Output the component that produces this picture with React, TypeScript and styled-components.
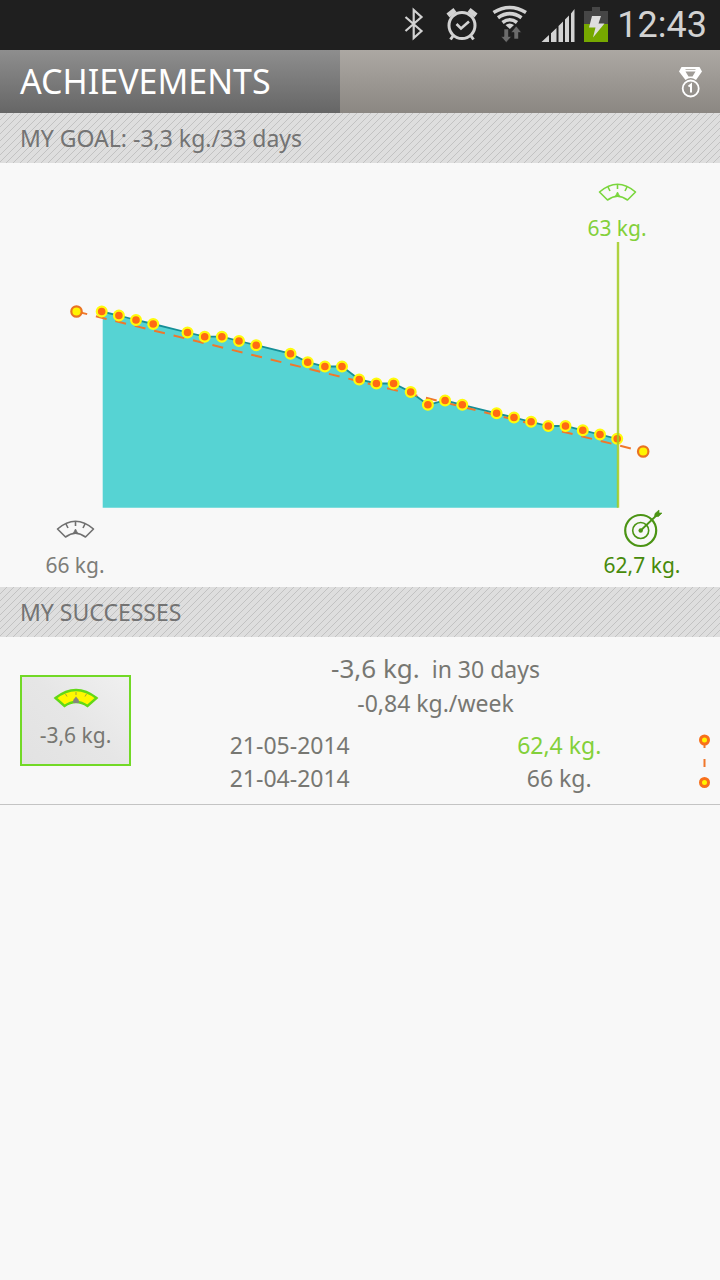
import React from "react";
import styled, { createGlobalStyle } from "styled-components";

const GlobalStyle = createGlobalStyle`
  * { box-sizing: border-box; }
  body {
    margin: 0;
    background: #f8f8f8;
    color: #777772;
    font-family: "Noto Sans", "Open Sans", sans-serif;
  }
`;

const Page = styled.div`
  min-height: 100vh;
  display: flex;
  flex-direction: column;
`;

const StatusBar = styled.div`
  display: flex;
  align-items: center;
  justify-content: flex-end;
  height: 50px;
  padding-right: 13px;
  background: #1f1f1f;
  color: #d2d2d2;
`;

const StatusIcons = styled.svg`
  width: 220px;
  height: 50px;
  flex: none;
`;

const Clock = styled.time`
  margin-left: 7px;
  font: 36px/46px Roboto, sans-serif;
`;

const Header = styled.header`
  display: flex;
  height: 63px;
  background: linear-gradient(#aca8a3, #8b8782);
`;

const Title = styled.h1`
  width: 340px;
  margin: 0;
  padding-left: 20px;
  background: linear-gradient(#8e8e8e, #666);
  color: #fff;
  font-size: 34px;
  font-weight: 400;
  line-height: 63px;
`;

const MedalButton = styled.button`
  display: flex;
  margin-left: auto;
  padding: 15px 17px 0 0;
  border: 0;
  background: none;
`;

const SectionTitle = styled.h2`
  margin: 0;
  padding-left: 20px;
  background: linear-gradient(135deg, #dedede 45%, #c2c2c2 45% 55%, #dedede 55%)
    0 0 / 7px 7px;
  color: #737373;
  font-size: 23px;
  font-weight: 400;
  line-height: 50px;
`;

const Chart = styled.svg`
  display: block;
  width: 100%;
  height: auto;
`;

const ChartLabel = styled.text`
  fill: ${(p) => p.color};
  font-size: 21px;
  text-anchor: middle;
`;

const SuccessRow = styled.article`
  display: flex;
  align-items: flex-start;
  gap: 20px;
  padding: 14px 0 9px 20px;
  border-bottom: 1px solid #c4c4c4;
`;

const Badge = styled.div`
  display: flex;
  flex-direction: column;
  align-items: center;
  flex: none;
  width: 111px;
  height: 91px;
  margin-top: 24px;
  padding-top: 11px;
  border: 2px solid #72d926;
  background: linear-gradient(45deg, #e2e2e2, #e6e6e6 50%, #f0f0f0);
  font-size: 21px;
  line-height: 28px;
`;

const BadgeIcon = styled.svg`
  width: 46px;
  height: 22px;
  margin-bottom: 11px;
`;

const Details = styled.div`
  flex: 1;
  text-align: center;
`;

const Summary = styled.p`
  margin: 0;
  font-size: 23px;
  line-height: 34px;
`;

const Loss = styled.span`
  margin-right: 12px;
  font-size: 26px;
`;

const Span = styled.div`
  display: flex;
  align-items: flex-start;
  margin-top: 9px;
  padding: 0 5px 0 4px;
`;

const Weights = styled.table`
  flex: 1;
  border-collapse: collapse;
  table-layout: fixed;
  font-size: 23px;
  line-height: 33px;
`;

const Cell = styled.td<{ $good?: boolean }>`
  width: 50%;
  padding: 0;
  color: ${(p) => (p.$good ? "#83d03a" : "inherit")};
`;

const points: [number, number][] = [
  [101.7, 148.5], [118.9, 152.5], [136, 157], [153.2, 161], [187.5, 169.5],
  [204.7, 173.7], [221.9, 173.7], [239, 178], [256.2, 182.2], [290.5, 190.7],
  [307.7, 199.2], [324.9, 203.5], [342, 203.5], [359.2, 216.5], [376.4, 220.5],
  [393.6, 220.5], [410.7, 229], [427.9, 241.8], [445.1, 237.5], [462.3, 241.8],
  [496.6, 250.3], [514, 254.5], [531.1, 258.8], [548.3, 263], [565.5, 263],
  [582.8, 267.3], [600, 271.5], [617.2, 275.8],
];
const line = points.map((p) => p.join(",")).join(" ");
const areaTop = points.slice(1).map((p) => p.join(",")).join(" ");

const arc = "M-18 -1 Q0 -16.500 18 -1 L10 7 Q0 -0.500 -10 7 Z";

function Gauge({ x, y, color }: { x: number; y: number; color: string }) {
  return (
    <g transform={`translate(${x} ${y})`} fill="none" stroke={color} strokeWidth="1.6" strokeLinejoin="round">
      <path d={arc} />
      <path d="M0 -8V-4M-9.500 -6L-7.500 -2M9.500 -6L7.500 -2" />
      <path d="M-2 3L0 -1L2 3Z" fill={color} strokeWidth="0.800" />
    </g>
  );
}

function GoalChart() {
  return (
    <Chart viewBox="0 0 720 424" role="img" aria-label="Weight progress">
      <polygon points={`102.700,344.700 102.700,148.500 ${areaTop} 618,344.700`} fill="#56d3d3" />
      <polyline points={line} fill="none" stroke="#168f97" strokeWidth="1.8" />
      <line x1="76.500" y1="148.500" x2="643.200" y2="288.500" stroke="#f0772b" strokeWidth="2" strokeDasharray="11 9" />
      {points.map(([x, y]) => (
        <circle key={x} cx={x} cy={y} r="4.900" fill="#ff6a13" stroke="#fffb0b" strokeWidth="2.200" />
      ))}
      {[[76.5, 148.5], [643.2, 288.5]].map(([x, y]) => (
        <circle key={x} cx={x} cy={y} r="5.200" fill="#fff500" stroke="#ea7322" strokeWidth="2.200" />
      ))}
      <line x1="618" y1="79" x2="618" y2="344.700" stroke="#a2cb20" strokeOpacity="0.850" strokeWidth="2.400" />
      <Gauge x={617.5} y={30} color="#7ad63d" />
      <ChartLabel x="617" y="73" color="#83d03a">63 kg.</ChartLabel>
      <Gauge x={75.5} y={367} color="#707070" />
      <ChartLabel x="75" y="410" color="#7d7d78">66 kg.</ChartLabel>
      <g fill="none" stroke="#4b9414">
        <circle cx="640.700" cy="367.500" r="15.500" strokeWidth="2.200" />
        <circle cx="640.700" cy="367.500" r="8" strokeWidth="1.600" />
        <circle cx="640.700" cy="367.500" r="2.200" fill="#4b9414" stroke="none" />
        <path d="M640.700 367.500L658 351" strokeWidth="1.800" />
        <path d="M654.500 353.500L655 350.500L659 347V350H662L658.500 353.500Z" fill="#4b9414" strokeWidth="0.600" />
      </g>
      <ChartLabel x="642" y="410" color="#478a0a">62,7 kg.</ChartLabel>
    </Chart>
  );
}

function DeviceIcons() {
  return (
    <StatusIcons viewBox="390 0 220 50" aria-hidden="true">
      <path d="M405.500 17L421.500 31L413.700 38V10L421.500 17L405.500 31" fill="none" stroke="#d2d2d2" strokeWidth="2.200" />
      <g fill="none" stroke="#d2d2d2">
        <circle cx="462" cy="25.500" r="13" strokeWidth="3" />
        <path d="M456.500 24L461 28.500L469 21.500" strokeWidth="2.600" />
        <path d="M453 36L450.500 39.500M471 36L473.500 39.500" strokeWidth="3" />
        <path d="M448 15.500L455 10M469 10L476 15.500" strokeWidth="5" />
      </g>
      <g fill="none" stroke="#d2d2d2" strokeWidth="3.600">
        <path d="M493.500 12.500Q509.800 2.500 526 12.500" />
        <path d="M498 17.700Q509.800 9.500 521.500 17.700" />
        <path d="M502.500 22.500Q509.800 17 517 22.500" />
      </g>
      <path d="M505.500 25Q509.800 22 514 25L509.800 29Z" fill="#d2d2d2" />
      <path d="M504 29H508.500V36.500H511.500L506.200 42.500L501 36.500H504ZM514 39H518.500V32.500H521.500L516.200 26L511 32.500H514Z" fill="#6b6b6b" stroke="#1f1f1f" strokeWidth="0.600" />
      <g fill="#d2d2d2">
        <path d="M541.500 42L549 35V42ZM551 33.200L556.500 28V42H551ZM558.500 26L563 21.500V42H558.500ZM565 19.500L569 15.500V42H565ZM571 13.500L574.500 9V42H571Z" />
      </g>
      <path d="M592 7H600V11H608V24H584V11H592Z" fill="#464646" />
      <path d="M584 24H608V42H584Z" fill="#76a800" />
      <path d="M592 16H601L598.500 23.500H604.500L593 37.500L595.500 27.500H589Z" fill="#dedede" />
    </StatusIcons>
  );
}

export default function App() {
  return (
    <Page>
      <GlobalStyle />
      <StatusBar>
        <DeviceIcons />
        <Clock>12:43</Clock>
      </StatusBar>
      <Header>
        <Title>ACHIEVEMENTS</Title>
        <MedalButton aria-label="Medals">
          <svg width="25" height="34" viewBox="0 0 25 34">
            <path d="M3.500 2H21.500L24 6.500L18 15Q12.500 11 7.500 15L1 6.500ZM7.500 6.500L10.500 11.500H14.500L17.500 6.500Z" fill="#fff" fillRule="evenodd" />
            <path d="M7.500 4.500H17.500" stroke="#aaa69f" strokeWidth="0.800" />
            <circle cx="12.700" cy="23.500" r="8" fill="none" stroke="#fff" strokeWidth="1.800" />
            <path d="M10.500 21.500L13 19.500V27.500" fill="none" stroke="#fff" strokeWidth="2" />
          </svg>
        </MedalButton>
      </Header>
      <main>
        <SectionTitle>MY GOAL: -3,3 kg./33 days</SectionTitle>
        <GoalChart />
        <SectionTitle>MY SUCCESSES</SectionTitle>
        <SuccessRow>
          <Badge>
            <BadgeIcon viewBox="-23 -11 46 22" aria-hidden="true">
              <path d="M-20.500 -1Q0 -17 20.500 -1L11.500 7Q0 -1 -11.500 7Z" fill="#fff800" stroke="#62d916" strokeWidth="2.400" />
              <path d="M0 -7V-4M-10.500 -5L-9 -2.500M10.500 -5L9 -2.500" stroke="#a8a238" />
              <path d="M-2.800 4V1L0 -2.500L2.800 1V4Z" fill="#85857d" />
            </BadgeIcon>
            -3,6 kg.
          </Badge>
          <Details>
            <Summary><Loss>-3,6 kg.</Loss>in 30 days</Summary>
            <Summary>-0,84 kg./week</Summary>
            <Span>
              <Weights>
                <tbody>
                  <tr><Cell>21-05-2014</Cell><Cell $good>62,4 kg.</Cell></tr>
                  <tr><Cell>21-04-2014</Cell><Cell>66 kg.</Cell></tr>
                </tbody>
              </Weights>
              <svg width="21" height="64" viewBox="0 0 21 64" aria-hidden="true">
                <path d="M10.500 10V19M10.500 30V38" stroke="#f0772b" strokeWidth="2" />
                <circle cx="10.500" cy="11" r="4" fill="#fff500" stroke="#f8701a" strokeWidth="3" />
                <circle cx="10.500" cy="53.500" r="4" fill="#fff500" stroke="#f8701a" strokeWidth="3" />
              </svg>
            </Span>
          </Details>
        </SuccessRow>
      </main>
    </Page>
  );
}
